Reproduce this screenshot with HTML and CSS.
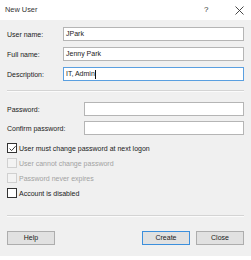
FILE: index.html
```html
<!DOCTYPE html>
<html>
<head>
<meta charset="utf-8">
<link rel="stylesheet" href="styles.css">
</head>
<body>
<div class="window">
  <div class="titlebar">
    <span class="title">New User</span>
    <span class="tb-btn help-q">?</span>
    <span class="tb-btn close-x">
      <svg width="9" height="9" viewBox="0 0 9 9"><path d="M0.5 0.5 L8.5 8.5 M8.5 0.5 L0.5 8.5" stroke="#333" stroke-width="0.9" fill="none"/></svg>
    </span>
  </div>
  <div class="content">
    <div class="group group-a">
      <div class="row"><span class="label">User name:</span><div class="field">JPark</div></div>
      <div class="row"><span class="label">Full name:</span><div class="field">Jenny Park</div></div>
      <div class="row"><span class="label">Description:</span><div class="field focused">IT, Admin<span class="caret"></span></div></div>
    </div>
    <div class="sep sep1"></div>
    <div class="group group-b">
      <div class="row"><span class="label">Password:</span><div class="field"></div></div>
      <div class="row"><span class="label">Confirm password:</span><div class="field"></div></div>
    </div>
    <div class="checks">
      <div class="check"><span class="box">
        <svg width="9" height="9" viewBox="0 0 9 9"><path d="M1.6 4.6 L3.6 6.6 L7.6 2.2" stroke="#222" stroke-width="0.9" fill="none"/></svg>
      </span><span>User must change password at next logon</span></div>
      <div class="check disabled"><span class="box"></span><span>User cannot change password</span></div>
      <div class="check disabled"><span class="box"></span><span>Password never expires</span></div>
      <div class="check"><span class="box"></span><span>Account is disabled</span></div>
    </div>
    <div class="sep sep2"></div>
    <div class="buttons">
      <div class="btn">Help</div>
      <div class="spacer"></div>
      <div class="btn default">Create</div>
      <div class="btn">Close</div>
    </div>
  </div>
</div>
</body>
</html>
```
FILE: styles.css
```css
html, body {
  margin: 0;
  padding: 0;
  background: #ffffff;
}
body {
  font-family: "Liberation Sans", Arial, sans-serif;
  font-size: 7px;
  color: #1a1a1a;
}
.window {
  width: 251px;
  height: 256px;
  background: #f0f0f0;
  box-shadow: 0 1px 3px rgba(0,0,0,0.35);
  display: flex;
  flex-direction: column;
}
.titlebar {
  height: 20px;
  background: #ffffff;
  display: flex;
  align-items: center;
  padding-left: 5px;
  position: relative;
}
.title {
  font-size: 7.4px;
  color: #333;
  margin-top: -1px;
}
.tb-btn {
  position: absolute;
  top: 5px;
  color: #333;
  font-size: 8px;
  line-height: 9px;
}
.help-q { left: 204px; }
.close-x { left: 235px; top: 6px; }
.content {
  padding: 7px 7px 0 7px;
  display: flex;
  flex-direction: column;
}
.group {
  display: flex;
  flex-direction: column;
}
.group-a { gap: 6px; }
.group-b { gap: 5px; }
.row {
  display: flex;
  align-items: center;
  height: 14px;
}
.group-a .label { width: 56px; }
.group-b .label { width: 77px; }
.field {
  flex: 1;
  height: 12px;
  background: #fff;
  border: 1px solid #b5b5b5;
  padding-left: 2px;
  line-height: 12px;
  display: flex;
  align-items: center;
}
.field.focused {
  border-color: #5a9fe0;
}
.caret {
  display: inline-block;
  width: 1px;
  height: 9px;
  background: #111;
  margin-left: 0.5px;
}
.sep {
  height: 1px;
  background: #d4d4d4;
  border-bottom: 1px solid #fbfbfb;
}
.sep1 { margin: 9px 0 10px 0; }
.checks {
  margin-top: 8px;
  display: flex;
  flex-direction: column;
  gap: 5px;
}
.check {
  display: flex;
  align-items: center;
  height: 10px;
}
.box {
  width: 8px;
  height: 8px;
  border: 1px solid #333;
  background: #fff;
  margin-right: 2px;
  display: flex;
}
.box svg { margin: -0.5px; }
.check.disabled { color: #a2a2a2; }
.check.disabled .box { border-color: #d0d0d0; background: #f3f3f3; }
.sep2 { margin: 17px 0 14px 0; }
.buttons {
  display: flex;
  gap: 6px;
}
.spacer { flex: 1; }
.btn {
  width: 46px;
  height: 12px;
  background: #e1e1e1;
  border: 1px solid #adadad;
  text-align: center;
  line-height: 12px;
  font-size: 7px;
}
.btn.default {
  border-color: #3c8fdc;
}
```
